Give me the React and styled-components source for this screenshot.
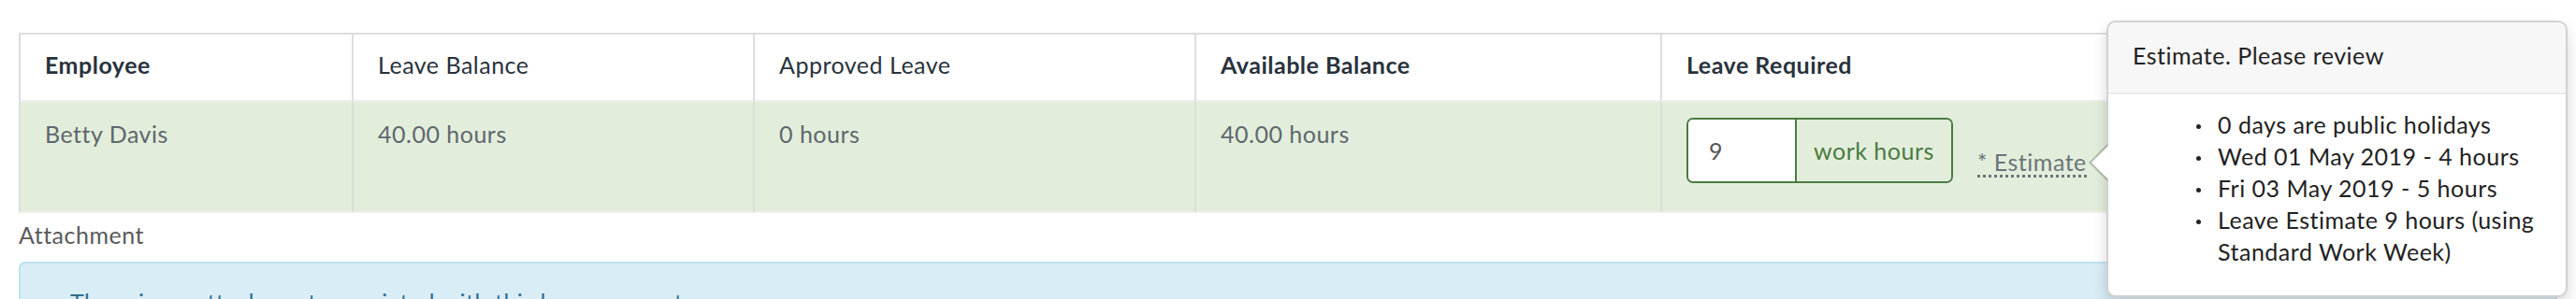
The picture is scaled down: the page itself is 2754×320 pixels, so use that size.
import React from 'react';
import styled, { createGlobalStyle } from 'styled-components';

const GlobalStyle = createGlobalStyle`
  body {
    margin: 0;
    background: #fff;
    font-family: Lato, "Open Sans", sans-serif;
    font-size: 25px;
    letter-spacing: 0.5px;
    line-height: 35px;
  }
`;

const Page = styled.div`
  position: relative;
  height: 320px;
  overflow: hidden;
  padding: 35px 20px 0;
  box-sizing: border-box;
`;

const Table = styled.div`
  display: grid;
  grid-template-columns: 356px 429px 472px 498px 1fr;
  border-top: 2px solid #dddddd;
  border-right: 2px solid #dddddd;
`;

const HeadCell = styled.div`
  display: flex;
  align-items: center;
  height: 72px;
  box-sizing: border-box;
  padding: 0 26px 5px;
  border-left: 2px solid #dddddd;
  border-bottom: 2px solid #eef0ee;
  color: #28323c;
  font-weight: ${(p) => (p.$bold ? 700 : 400)};
`;

const BodyCell = styled.div`
  height: 119px;
  box-sizing: border-box;
  padding: 17px 26px;
  background: #e2eedb;
  border-left: 2px solid #dddddd;
  border-bottom: 2px solid #eef1ec;
  color: #5f676e;
`;

const LeaveRow = styled.div`
  display: flex;
  align-items: flex-end;
  gap: 26px;
`;

const InputGroup = styled.div`
  display: flex;
  height: 70px;
  box-sizing: border-box;
  border: 2px solid #4a7a42;
  border-radius: 7px;
  overflow: hidden;
`;

const HoursInput = styled.div`
  width: 116px;
  box-sizing: border-box;
  padding: 0 22px;
  display: flex;
  align-items: center;
  background: #fff;
  color: #555;
  border-right: 2px solid #4a7a42;
`;

const Addon = styled.div`
  display: flex;
  align-items: center;
  padding: 0 18px;
  background: #e2eedb;
  color: #4a7a42;
`;

const EstimateLink = styled.span`
  color: #6c747a;
  line-height: 28px;
  border-bottom: 3px dotted #6c747a;
  margin-bottom: 6px;
`;

const AttachLabel = styled.div`
  color: #5a5a5a;
  margin: 6px 0 11px;
`;

const InfoBox = styled.div`
  background: #d9edf7;
  border: 2px solid #bfe3ef;
  border-radius: 7px;
  color: #31708f;
  padding: 24px 53px;
  height: 120px;
`;

const Popover = styled.div`
  position: absolute;
  left: 2252px;
  top: 22px;
  width: 493px;
  background: #fff;
  border: 2px solid rgba(0, 0, 0, 0.18);
  border-radius: 10px;
  box-shadow: 0 8px 16px rgba(0, 0, 0, 0.16);
  box-sizing: border-box;
  color: #222;

  &::before,
  &::after {
    content: '';
    position: absolute;
    border-style: solid;
    border-color: transparent;
  }
  &::before {
    left: -21px;
    top: 130px;
    border-width: 20px 20px 20px 0;
    border-right-color: rgba(0, 0, 0, 0.2);
  }
  &::after {
    left: -18px;
    top: 131px;
    border-width: 19px 19px 19px 0;
    border-right-color: #fff;
  }
`;

const PopTitle = styled.div`
  background: #f7f7f7;
  border-bottom: 2px solid #ebebeb;
  border-radius: 9px 9px 0 0;
  padding: 18px 26px 22px;
`;

const PopBody = styled.div`
  padding: 15px 20px 30px 24px;
`;

const PopList = styled.ul`
  margin: 0;
  padding-left: 93px;
  line-height: 34px;
  list-style: none;
`;

const PopItem = styled.li`
  position: relative;

  &::before {
    content: '';
    position: absolute;
    left: -23px;
    top: 17px;
    width: 5px;
    height: 5px;
    border-radius: 50%;
    background: #222;
  }
`;

const columns = [
  { head: 'Employee', bold: true, value: 'Betty Davis' },
  { head: 'Leave Balance', value: '40.00 hours' },
  { head: 'Approved Leave', value: '0 hours' },
  { head: 'Available Balance', bold: true, value: '40.00 hours' },
];

const estimateLines = [
  '0 days are public holidays',
  'Wed 01 May 2019 - 4 hours',
  'Fri 03 May 2019 - 5 hours',
  'Leave Estimate 9 hours (using Standard Work Week)',
];

export default function App() {
  return (
    <>
      <GlobalStyle />
      <Page>
        <Table>
          {columns.map((c) => (
            <HeadCell key={c.head} $bold={c.bold}>{c.head}</HeadCell>
          ))}
          <HeadCell $bold>Leave Required</HeadCell>
          {columns.map((c) => (
            <BodyCell key={c.head}>{c.value}</BodyCell>
          ))}
          <BodyCell>
            <LeaveRow>
              <InputGroup>
                <HoursInput>9</HoursInput>
                <Addon>work hours</Addon>
              </InputGroup>
              <EstimateLink>* Estimate</EstimateLink>
            </LeaveRow>
          </BodyCell>
        </Table>
        <AttachLabel>Attachment</AttachLabel>
        <InfoBox>There is no attachment associated with this leave request.</InfoBox>
        <Popover>
          <PopTitle>Estimate. Please review</PopTitle>
          <PopBody>
            <PopList>
              {estimateLines.map((line) => (
                <PopItem key={line}>{line}</PopItem>
              ))}
            </PopList>
          </PopBody>
        </Popover>
      </Page>
    </>
  );
}
